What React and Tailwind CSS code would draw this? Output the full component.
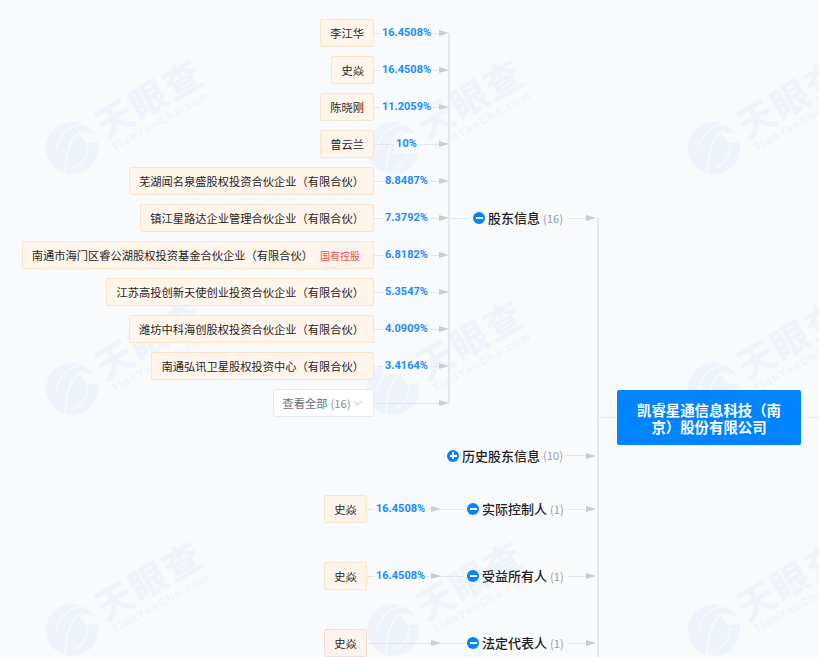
import { ChevronDown } from "lucide-react";

const font = { fontFamily: '"Noto Sans CJK SC", "Noto Sans", sans-serif' };
const pctFont = { fontFamily: 'Roboto, "Liberation Sans", sans-serif' };

const holders = [
  { name: "李江华", pct: "16.4508%" },
  { name: "史焱", pct: "16.4508%" },
  { name: "陈晓刚", pct: "11.2059%" },
  { name: "曾云兰", pct: "10%" },
  { name: "芜湖闻名泉盛股权投资合伙企业（有限合伙）", pct: "8.8487%" },
  { name: "镇江星路达企业管理合伙企业（有限合伙）", pct: "7.3792%" },
  { name: "南通市海门区睿公湖股权投资基金合伙企业（有限合伙）", pct: "6.8182%", tag: "国有控股" },
  { name: "江苏高投创新天使创业投资合伙企业（有限合伙）", pct: "5.3547%" },
  { name: "潍坊中科海创股权投资合伙企业（有限合伙）", pct: "4.0909%" },
  { name: "南通弘讯卫星股权投资中心（有限合伙）", pct: "3.4164%" },
];

// the tiled 天眼查 mark that sits behind the whole page
function WatermarkTile() {
  return (
    <svg width="321" height="241" viewBox="0 0 321 241" fill="#eef4fb">
      <circle cx="72" cy="148" r="26" />
      <g fill="none" stroke="#f8fafc" strokeLinecap="round">
        <path d="M82 124Q62 127 56 148" strokeWidth="1.5" />
        <path d="M82 131Q66 138 65 174" strokeWidth="2" />
        <path d="M96 136Q88 130 80 134L86 142Q98 144 97 138" fill="#f8fafc" strokeWidth="1" />
        <path d="M88 146Q88 160 74 168" strokeWidth="1.5" />
      </g>
      <text x="105" y="140" transform="rotate(-30 105 140)" fontSize="37" fontWeight="700" letterSpacing="2">
        天眼查
      </text>
      <text x="114" y="151" transform="rotate(-29 114 151)" fontSize="11" fontWeight="700" letterSpacing="1.6" fontFamily="Liberation Sans, sans-serif">
        TianYanCha.com
      </text>
    </svg>
  );
}

function Watermark() {
  return (
    <div className="pointer-events-none absolute inset-0 grid grid-cols-[repeat(3,321px)] auto-rows-[241px] overflow-hidden">
      {Array.from({ length: 9 }).map((_, i) => (
        <WatermarkTile key={i} />
      ))}
    </div>
  );
}

function Arrow() {
  return (
    <div className="h-0 w-0 border-y-[3.5px] border-l-[10px] border-y-transparent border-l-[#c9cdd2]" />
  );
}

function Toggle({ open }) {
  return (
    <span className="relative mr-[3px] flex h-[12px] w-[12px] shrink-0 items-center justify-center rounded-full bg-[#0084ff]">
      <span className="h-[2px] w-[7px] bg-white" />
      {!open && <span className="absolute h-[7px] w-[2px] bg-white" />}
    </span>
  );
}

function Holder({ name, pct, tag }) {
  return (
    <div className="flex h-[37px] items-center justify-end">
      <div className="flex h-[28px] items-center rounded-[2px] border border-[#fde3c8] bg-[#fff5eb] px-[9px] text-[11.25px] whitespace-nowrap text-[#1f1f1f]">
        <span>{name}</span>
        {tag && (
          <span className="ml-[2px] flex h-[20px] items-center bg-[#fff3f1] pr-[4px] pl-[5px] text-[10px] text-[#f04d4d]">
            {tag}
          </span>
        )}
      </div>
      <div className="relative flex w-[65px] items-center justify-center">
        <div className="absolute inset-x-0 h-px bg-[#e4e7ea]" />
        <span style={pctFont} className="relative mt-[1px] bg-[#f8fafc] px-[2px] text-[11px] font-bold text-[#1a8cff]">
          {pct}
        </span>
      </div>
      <Arrow />
      <div className="h-px w-px bg-[#e4e7ea]" />
    </div>
  );
}

function Label({ title, count, open }) {
  return (
    <div className="flex items-center whitespace-nowrap">
      <Toggle open={open} />
      <span className="text-[13px] font-medium text-[#1f1f1f]">{title}</span>
      <span className="ml-[3px] text-[11.25px] text-[#9a9fa6]">({count})</span>
    </div>
  );
}

// line + arrow running from a label into the trunk line at x=598
function ToTrunk() {
  return (
    <div className="ml-[4px] flex flex-1 items-center">
      <div className="h-px flex-1 bg-[#e4e7ea]" />
      <Arrow />
      <div className="w-px" />
    </div>
  );
}

function SingleGroup({ person, pct, title, red }) {
  return (
    <div className="flex h-[39px] shrink-0 items-center">
      <div className="flex w-[467px] items-center justify-end">
        <div
          className={`flex h-[28px] w-[43px] items-center justify-center rounded-[2px] border text-[11.25px] text-[#1f1f1f] ${
            red ? "border-[#fdd9d5] bg-[#fff3f1]" : "border-[#fde3c8] bg-[#fff5eb]"
          }`}
        >
          {person}
        </div>
        <div className="relative flex h-[28px] w-[74px] items-center">
          <div className="absolute inset-x-0 h-px bg-[#e4e7ea]" />
          {pct && (
            <span style={pctFont} className="relative ml-[7px] bg-[#f8fafc] px-[2px] text-[11px] font-bold text-[#1a8cff]">
              {pct}
            </span>
          )}
          <div className="absolute right-0">
            <Arrow />
          </div>
        </div>
        <div className="h-px w-[24px] bg-[#e4e7ea]" />
        <div className="w-[2px]" />
      </div>
      <div className="flex flex-1 items-center">
        <Label title={title} count={1} open />
        <ToTrunk />
      </div>
    </div>
  );
}

export default function App() {
  return (
    <div style={font} className="relative h-[657px] w-[819px] overflow-hidden bg-[#f8fafc] [text-spacing-trim:space-all]">
      <Watermark />
      <div className="relative flex h-full">
        <div className="flex w-[597px] shrink-0 flex-col pt-[14.5px]">
          {/* shareholders */}
          <div className="flex shrink-0">
            <div className="relative w-[450px] shrink-0">
              {holders.map((h) => (
                <Holder key={h.name} {...h} />
              ))}
              <div className="flex h-[37px] items-center justify-end">
                <div className="flex h-[28px] w-[101px] items-center justify-center rounded-[2px] border border-[#e8eaed] bg-white text-[11.25px] whitespace-nowrap text-[#6b7078]">
                  查看全部
                  <span className="ml-[3px] text-[#8a8f96]">(16)</span>
                  <ChevronDown size={14} strokeWidth={1.2} className="text-[#9a9fa6]" />
                </div>
                <div className="flex w-[76px] items-center">
                  <div className="h-px flex-1 bg-[#e4e7ea]" />
                  <Arrow />
                  <div className="h-px w-px bg-[#e4e7ea]" />
                </div>
              </div>
              <div className="absolute top-[18px] right-0 bottom-[18px] w-[2px] bg-[#e6e8eb]" />
            </div>
            <div className="flex flex-1 items-center">
              <div className="mr-[4px] h-px w-[19px] bg-[#e4e7ea]" />
              <Label title="股东信息" count={16} open />
              <ToTrunk />
            </div>
          </div>

          <div className="flex h-[68px] shrink-0 items-center pl-[447px]">
            <Label title="历史股东信息" count={10} />
            <ToTrunk />
          </div>
          <div className="flex shrink-0 flex-col gap-[28px]">
            <SingleGroup person="史焱" pct="16.4508%" title="实际控制人" />
            <SingleGroup person="史焱" pct="16.4508%" title="受益所有人" />
            <SingleGroup person="史焱" title="法定代表人" red />
          </div>
        </div>

        <div className="mt-[218px] w-[2px] shrink-0 bg-[#e6e8eb]" />

        <div className="flex flex-1 items-start pt-[390px]">
          <div className="mt-[27px] h-px w-[18px] bg-[#e8eaed]" />
          <div className="flex h-[55px] w-[184px] items-center justify-center rounded-[2px] bg-[#0084ff] px-[18px] text-center text-[14.4px] leading-[17px] font-bold text-white">
            凯睿星通信息科技（南京）股份有限公司
          </div>
          <div className="mt-[27px] h-px flex-1 bg-[#e8eaed]" />
        </div>
      </div>
    </div>
  );
}
